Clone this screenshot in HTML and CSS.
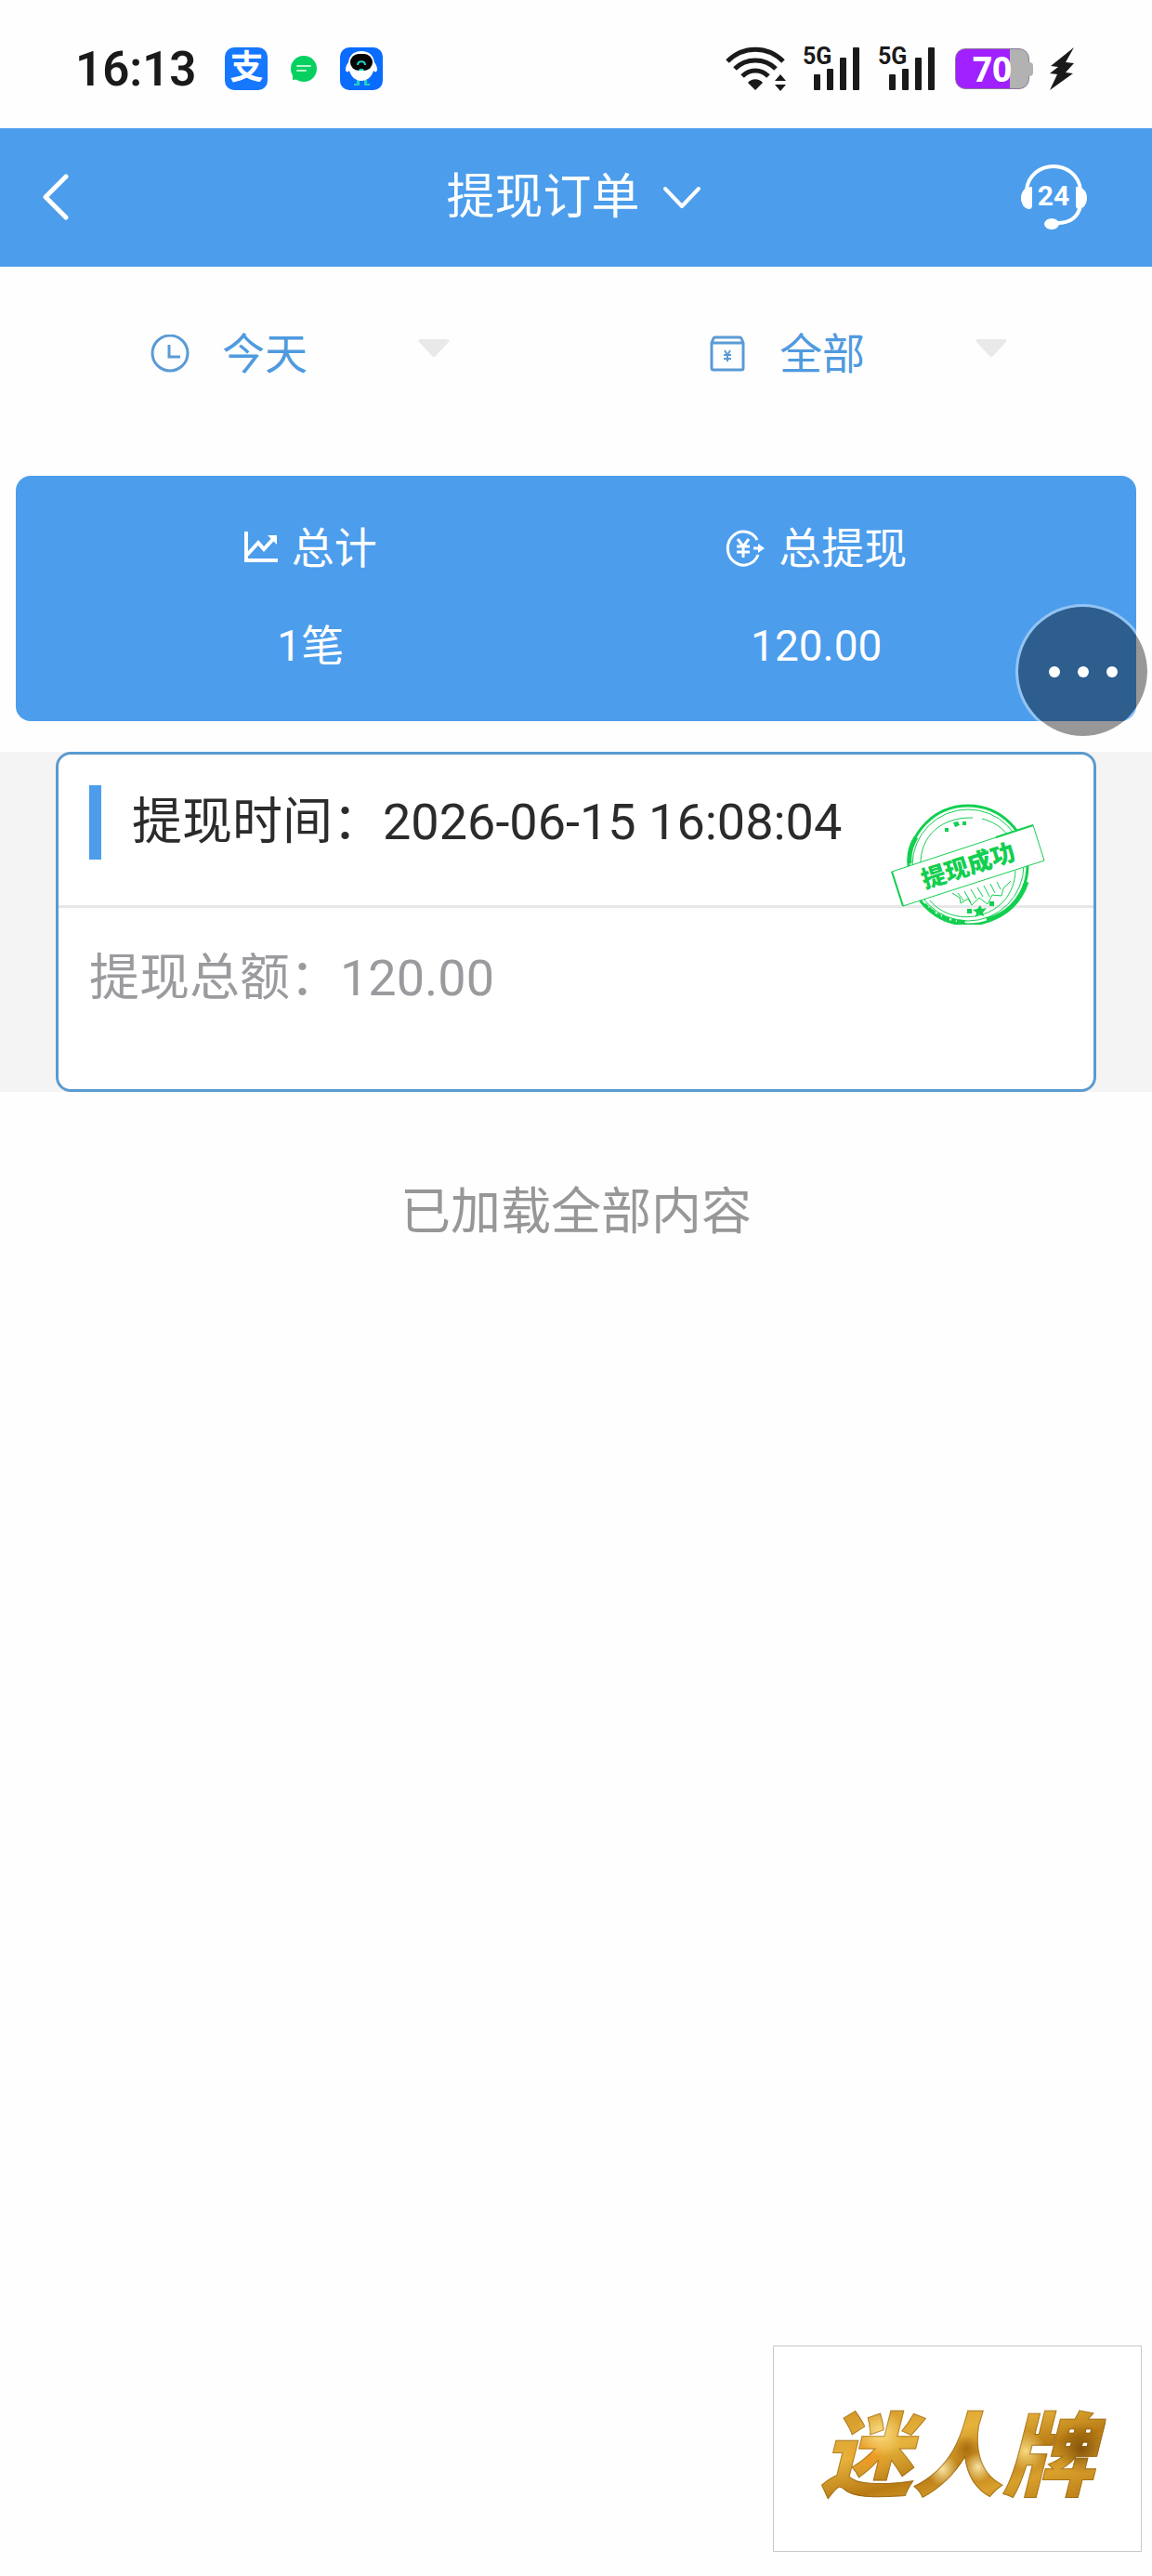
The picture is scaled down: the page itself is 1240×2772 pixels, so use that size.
FILE: index.html
```html
<!DOCTYPE html>
<html lang="zh-CN">
<head>
  <meta charset="UTF-8" />
  <meta name="viewport" content="width=device-width, initial-scale=1.0"/>
  <title>提现订单</title>
  <link rel="stylesheet" href="styles.css">
</head>
<body>
  <!-- status bar -->
  <div class="status-bar">
    <div class="status-left">
      <span class="clock">16:13</span>
      <span class="app-icon app-pay">支</span>
      <svg class="app-svg" viewBox="0 0 46 46">
        <circle cx="23" cy="23" r="14" fill="#06d160"/>
        <path d="M11 27v8l9-1z" fill="#06d160"/>
        <path d="M16 20h14M16 25h9" stroke="#b9f5d2" stroke-width="2" stroke-linecap="round"/>
      </svg>
      <svg class="app-svg" viewBox="0 0 46 46">
        <rect width="46" height="46" rx="10" fill="#0a6cff"/>
        <path d="M18 35v4h-3v2h6v-6zM26 35v6h6v-2h-3v-4z" fill="#22d3c5"/>
        <path d="M23 4c9 0 13 5 14 12 3 4 4 9 2 10-1 1-2 0-3-1-2 7-7 11-13 11S12 32 10 25c-1 1-2 2-3 1-2-1-1-6 2-10C10 9 14 4 23 4z" fill="#fff"/>
        <rect x="11" y="7" width="24" height="18" rx="9" fill="#050505"/>
        <path d="M19 19c0-5 8-5 8 0" fill="none" stroke="#22d3c5" stroke-width="2"/>
        <path d="M20 25c0-3 6-3 6 0z" fill="#22d3c5"/>
      </svg>
    </div>
    <div class="status-right">
      <svg class="wifi" viewBox="0 0 66 48" fill="none" stroke="#1a1a1a" stroke-width="5">
        <path d="M2 16C19-1 45-1 62 16M10 24c12-12 32-12 44 0M18 32c8-8 20-8 28 0"/>
        <path d="M32 47l-8-8c4-5 12-5 16 0zM59 30l6 7H53zM59 48l6-7H53z" fill="#1a1a1a" stroke="none"/>
      </svg>
      <span class="signal">
        <span class="net">5G</span>
        <svg viewBox="0 0 50 46" fill="#1a1a1a">
          <rect x="0" y="29" width="7" height="17" rx="1"/><rect x="14" y="23" width="7" height="23" rx="1"/>
          <rect x="28" y="11" width="7" height="35" rx="1"/><rect x="42" y="0" width="7" height="46" rx="1"/>
        </svg>
      </span>
      <span class="signal">
        <span class="net">5G</span>
        <svg viewBox="0 0 50 46" fill="#1a1a1a">
          <rect x="0" y="29" width="7" height="17" rx="1"/><rect x="14" y="23" width="7" height="23" rx="1"/>
          <rect x="28" y="11" width="7" height="35" rx="1"/><rect x="42" y="0" width="7" height="46" rx="1"/>
        </svg>
      </span>
      <span class="battery">70</span>
      <svg class="bolt" viewBox="0 0 28 46"><path d="M27 0L2 20l8 1-9 7 8 1L1 46l25-18-8-1 9-10-9-1z" fill="#1a1a1a"/></svg>
    </div>
  </div>

  <!-- header -->
  <header class="nav-bar">
    <button type="button" class="nav-btn" aria-label="返回">
      <svg class="back" viewBox="0 0 30 52" fill="none" stroke="#fff" stroke-width="5" stroke-linecap="round" stroke-linejoin="round"><path d="M26 3L4 25l22 22"/></svg>
    </button>
    <button type="button" class="nav-title">
      提现订单
      <svg viewBox="0 0 42 26" fill="none" stroke="#fff" stroke-width="4" stroke-linecap="round" stroke-linejoin="round"><path d="M3 3l18 19L39 3"/></svg>
    </button>
    <button type="button" class="nav-btn" aria-label="客服">
      <svg class="service" viewBox="0 0 72 72" fill="none" stroke="#fff" stroke-width="4">
        <path d="M7 27C9 11 22 2 36 2s27 9 29 25M65 45C62 57 54 63 40 63"/>
        <path d="M13 24c-8 0-12 5-12 12s4 12 9 12c2 0 3-2 3-4zM60 24c8 0 12 5 12 12s-4 12-9 12c-2 0-3-2-3-4z" fill="#fff" stroke="none"/>
        <ellipse cx="34" cy="64" rx="8" ry="6" fill="#fff" stroke="none"/>
        <text class="service-text" x="36" y="44" text-anchor="middle">24</text>
      </svg>
    </button>
  </header>

  <main>
    <form class="filters">
      <div class="filter">
        <label for="dateFilter" aria-label="日期">
          <svg viewBox="0 0 42 42" fill="none" stroke="#5b9bd5" stroke-width="3"><circle cx="21" cy="20" r="19"/><path d="M20 11v13h12"/></svg>
        </label>
        <select id="dateFilter">
          <option>今天</option>
          <option>昨天</option>
        </select>
        <svg class="caret" viewBox="0 0 34 19"><path d="M4 0h26q6 0 2 4L19 18q-2 2-4 0L2 4q-4-4 2-4z" fill="#e9e9e9"/></svg>
      </div>
      <div class="filter">
        <label for="typeFilter" aria-label="类型">
          <svg viewBox="0 0 42 42" fill="none" stroke="#5b9bd5" stroke-width="3">
            <path d="M4 9l2-5q1-1 2-1h26q1 0 2 1l2 5v27q0 2-2 2H6q-2 0-2-2zM4 9h34"/>
            <path d="M18 17l3 5 3-5M21 22v7M17 22h8M17 26h8" stroke-width="2"/>
          </svg>
        </label>
        <select id="typeFilter">
          <option>全部</option>
          <option>提现成功</option>
        </select>
        <svg class="caret" viewBox="0 0 34 19"><path d="M4 0h26q6 0 2 4L19 18q-2 2-4 0L2 4q-4-4 2-4z" fill="#e9e9e9"/></svg>
      </div>
    </form>

    <section class="summary">
      <div class="summary-item">
        <div class="summary-label">
          <svg class="icon-chart" viewBox="0 0 36 36" fill="none" stroke="#fff" stroke-width="4">
            <path d="M2 0v31h34"/><path d="M3 25L15 12l6 7L32 7"/><path d="M25 4h10v10z" fill="#fff" stroke="none"/>
          </svg>
          总计
        </div>
        <div>1笔</div>
      </div>
      <div class="summary-item">
        <div class="summary-label">
          <svg class="icon-yen" viewBox="0 0 42 40" fill="none" stroke="#fff" stroke-width="3">
            <path d="M34 11A17 18 0 1 0 35 27"/><path d="M13 10l6 8 6-8M19 18v12M12 18h14M12 24h14M30 20h8"/><path d="M35 15l7 5-7 5z" fill="#fff" stroke="none"/>
          </svg>
          总提现
        </div>
        <div>120.00</div>
      </div>
    </section>

    <section class="order-list">
      <article class="order">
        <div class="order-head">提现时间：2026-06-15 16:08:04</div>
        <div class="order-body">提现总额：120.00</div>
        <svg class="stamp" viewBox="0 0 166 130" fill="none" stroke="#12cf4f">
          <circle cx="83" cy="66" r="64" stroke-width="3"/>
          <circle cx="83" cy="66" r="60" stroke-width="1"/>
          <path d="M20 64C19 54 22 44 27 36M146 84c-7 21-22 36-43 41" stroke-width="5"/>
          <path d="M36 108c12 13 28 19 46 19" stroke-width="4" stroke-dasharray="5 1 9 2"/>
          <path d="M32 66C31 34 55 14 88 15M98 16c16 4 28 14 34 28M134 72c-2 52-66 64-92 32" stroke-width="1"/>
          <path d="M58 26h4v4h-4zM67 20l5-1 2 4-5 2zM77 19h4v4h-4z" fill="#12cf4f" stroke="none"/>
          <path d="M66 96l8 5 1 6 8-5 4 7 8-8 9 7 5-10 10 1 2-8 8-8M72 96l6 8M79 94l7 12M86 92l6 10M93 90l6 10M100 88l6 12M107 86l5 10M114 84l4 8" stroke-width="1"/>
          <path d="M82 113h5v5h-5zM96 109l2 4 5-1-4 5 1 4-5-2-4 3 1-5-4-3 5-1zM106 105h5v5h-5z" fill="#12cf4f" stroke="none"/>
          <path d="M1 73L153 23l12 38L13 110z" fill="#fff" stroke-width="1"/>
          <path d="M1 73l12 37M153 23l-40 13" stroke-width="2"/>
          <text class="stamp-text" x="83" y="76" text-anchor="middle" transform="rotate(-18 83 66)">提现成功</text>
        </svg>
      </article>
    </section>

    <p class="list-end">已加载全部内容</p>
  </main>

  <button type="button" class="float-btn" aria-label="更多"><i></i><i></i><i></i></button>
  <div class="brand"><span>迷人牌</span></div>
</body>
</html>
```
FILE: styles.css
```css
* {
  box-sizing: border-box;
}

body {
  margin: 0;
  min-height: 100vh;
  background: #fefefe;
  color: #2b2b2b;
  font-family: Roboto, "Noto Sans CJK SC", sans-serif;
}

svg {
  display: block;
  flex: none;
}

button,
select {
  padding: 0;
  border: none;
  background: none;
  font-family: inherit;
}

/* status bar */
.status-bar {
  display: flex;
  align-items: center;
  justify-content: space-between;
  height: 138px;
  padding: 10px 83px 0 81px;
  color: #1a1a1a;
}

.status-left,
.status-right {
  display: flex;
  align-items: center;
}

.status-left {
  gap: 16px;
}

.clock {
  margin-right: 15px;
  font-size: 51px;
  font-weight: 600;
}

.app-icon,
.app-svg {
  width: 46px;
  height: 46px;
}

.app-pay {
  border-radius: 10px;
  background: #1677ff;
  color: #fff;
  font-size: 36px;
  font-weight: 700;
  line-height: 44px;
  text-align: center;
}

.wifi {
  width: 66px;
  height: 48px;
  margin-right: 18px;
}

.signal {
  position: relative;
  margin-right: 20px;
  padding-left: 11px;
}

.signal svg {
  width: 50px;
  height: 46px;
}

.net {
  position: absolute;
  left: -1px;
  top: -3px;
  font-size: 25px;
  font-weight: 700;
  line-height: 25px;
}

.battery {
  position: relative;
  width: 80px;
  height: 44px;
  margin: 0 21px 0 1px;
  border: 1px solid #8d7a9b;
  border-radius: 11px;
  background: linear-gradient(90deg, #a020ff 75%, #b2b2b2 75%);
  color: #fff;
  font: 700 37px/42px "Open Sans", sans-serif;
  text-align: center;
}

.battery::after {
  content: "";
  position: absolute;
  right: -5px;
  top: 14px;
  width: 5px;
  height: 15px;
  border-radius: 0 4px 4px 0;
  background: #b2b2b2;
}

.bolt {
  width: 28px;
  height: 46px;
}

/* header */
.nav-bar {
  display: flex;
  align-items: center;
  justify-content: space-between;
  height: 149px;
  padding: 0 70px 0 45px;
  background: #4c9dec;
}

.nav-btn {
  display: flex;
  width: 96px;
}

.nav-btn:last-child {
  justify-content: flex-end;
  width: 76px;
}

.back {
  width: 30px;
  height: 52px;
}

.nav-title {
  display: flex;
  align-items: center;
  gap: 24px;
  color: #fff;
  font-size: 52px;
  line-height: 68px;
}

.nav-title svg {
  width: 42px;
  height: 26px;
}

.service {
  width: 72px;
  height: 72px;
}

.service-text {
  fill: #fff;
  stroke: none;
  font-size: 30px;
  font-weight: 700;
}

/* filters */
.filters {
  display: flex;
  padding: 60px 20px 98px;
}

.filter {
  display: flex;
  flex: 1;
  align-items: center;
  padding: 0 136px 0 142px;
}

.filter label svg {
  width: 42px;
  height: 42px;
}

.filter select {
  flex: 1;
  min-width: 0;
  height: 67px;
  margin-left: 35px;
  appearance: none;
  color: #4f9adf;
  font-size: 46px;
}

.caret {
  width: 34px;
  height: 19px;
  margin-bottom: 12px;
}

/* summary */
.summary {
  display: flex;
  margin: 0 17px 33px;
  padding: 47px 72px 50px 45px;
  border-radius: 16px;
  background: #4c9dec;
  color: #fff;
  font-size: 46px;
  line-height: 62px;
}

.summary-item {
  display: flex;
  flex: 1;
  flex-direction: column;
  align-items: center;
  gap: 43px;
}

.summary-label {
  display: flex;
  align-items: center;
  gap: 15px;
}

.icon-chart {
  width: 36px;
  height: 36px;
}

.icon-yen {
  width: 42px;
  height: 40px;
}

/* orders */
.order-list {
  padding: 0 60px;
  background: #f4f4f4;
}

.order {
  position: relative;
  border: 3px solid #5b9bcf;
  border-radius: 16px;
  background: #fff;
  font-size: 54px;
}

.order-head {
  display: flex;
  align-items: center;
  padding: 33px 33px 49px;
  border-bottom: 3px solid #e7e7e7;
  line-height: 80px;
}

.order-head::before {
  content: "";
  width: 13px;
  height: 80px;
  margin-right: 33px;
  background: #4c9dec;
}

.order-body {
  padding: 42px 33px 85px;
  color: #9b9b9f;
  line-height: 68px;
}

.stamp {
  position: absolute;
  top: 53px;
  right: 52px;
  width: 166px;
  height: 130px;
}

.stamp-text {
  fill: #12cf4f;
  stroke: none;
  font-family: "Noto Sans CJK SC", sans-serif;
  font-size: 26px;
  font-weight: 900;
}

.list-end {
  margin: 96px 0 0;
  color: #979797;
  font-size: 54px;
  line-height: 68px;
  text-align: center;
}

/* floating elements */
.float-btn {
  position: fixed;
  top: 650px;
  right: 2px;
  display: flex;
  align-items: center;
  justify-content: center;
  gap: 19px;
  width: 145px;
  height: 145px;
  border: 3px solid rgba(255, 255, 255, 0.4);
  border-radius: 50%;
  background: rgba(0, 0, 0, 0.4);
  background-clip: padding-box;
}

.float-btn i {
  width: 12px;
  height: 12px;
  border-radius: 50%;
  background: #fff;
}

.brand {
  position: fixed;
  right: 11px;
  bottom: 26px;
  display: flex;
  align-items: center;
  justify-content: center;
  width: 397px;
  height: 222px;
  border: 1px solid #c8c8c8;
  background: #fff;
}

.brand span {
  padding: 0 12px;
  background:
    radial-gradient(circle at 24% 36%, rgba(255, 226, 140, 0.9), transparent 10%),
    radial-gradient(circle at 20% 56%, rgba(240, 150, 30, 0.9), transparent 9%),
    radial-gradient(circle at 45% 68%, rgba(255, 238, 175, 0.9), transparent 9%),
    radial-gradient(circle at 57% 66%, rgba(255, 238, 175, 0.9), transparent 8%),
    radial-gradient(circle at 73% 52%, rgba(255, 228, 140, 0.9), transparent 9%),
    radial-gradient(circle at 92% 50%, rgba(125, 78, 8, 0.9), transparent 9%),
    radial-gradient(circle at 53% 50%, rgba(160, 98, 10, 0.8), transparent 8%),
    linear-gradient(165deg, #c98a1c, #e6b23c 40%, #b97c14 60%, #d9a02c 75%, #b0720f);
  background-clip: text;
  -webkit-background-clip: text;
  -webkit-text-stroke: 1px rgba(130, 84, 12, 0.5);
  color: transparent;
  font-family: "Noto Sans CJK SC", sans-serif;
  font-size: 98px;
  font-style: italic;
  font-weight: 900;
  line-height: 124px;
}
```
